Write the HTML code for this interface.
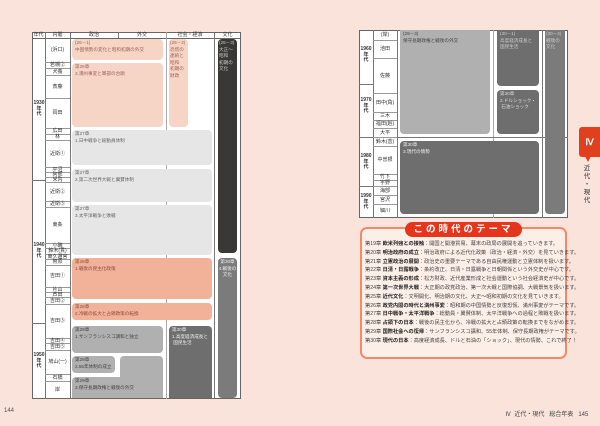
<!DOCTYPE html>
<html><head><meta charset="utf-8"><style>
*{margin:0;padding:0;box-sizing:border-box}
body{width:600px;height:426px;background:#f9e3da;position:relative;overflow:hidden;font-family:"Liberation Sans","Noto Sans CJK JP",sans-serif;color:#333}
.a{position:absolute}
.t{position:absolute;background:#fff;border:1px solid #666}
.h{position:absolute;font-size:5px;line-height:6px;text-align:center;color:#333}
.vl{position:absolute;width:1px;background:#777}
.hl{position:absolute;height:1px;background:#999}
.b{position:absolute;border-radius:4px;font-size:4.6px;line-height:6.5px;padding:1px 3px;color:#555;white-space:nowrap}
.pk{background:#f6d5c6;color:#a06050}
.or{background:#f2b29a;color:#8a4a38}
.lg{background:#e6e6e6;color:#666}
.mg{background:#b0b0b0;color:#444}
.dg{background:#6e6e6e;color:#eee}
.bk{background:#3a3835;color:#ccc}
.c{position:absolute;font-size:5px;text-align:center;color:#333;display:flex;align-items:center;justify-content:center;line-height:5px}
.d{position:absolute;font-size:5px;line-height:5.5px;text-align:center;font-weight:bold;color:#333}
.th{font-size:5.2px;line-height:8.8px;white-space:nowrap;color:#444}
.th b{color:#222}
</style></head><body>

<div class="t" style="left:32px;top:32px;width:209px;height:367px"></div>
<div class="hl" style="left:32px;top:38px;width:209px;background:#666"></div>
<div class="vl" style="left:45px;top:32px;height:367px"></div>
<div class="vl" style="left:70px;top:32px;height:367px"></div>
<div class="vl" style="left:118px;top:32px;height:6px"></div>
<div class="vl" style="left:166px;top:32px;height:367px;background:#aaa"></div>
<div class="vl" style="left:214px;top:32px;height:367px"></div>
<div class="h" style="left:32px;top:32px;width:13px">年代</div>
<div class="h" style="left:45px;top:32px;width:25px">内閣</div>
<div class="h" style="left:70px;top:32px;width:48px">政治</div>
<div class="h" style="left:118px;top:32px;width:48px">外交</div>
<div class="h" style="left:166px;top:32px;width:48px">社会・経済</div>
<div class="h" style="left:214px;top:32px;width:27px">文化</div>
<div class="hl" style="left:32px;top:180px;width:13px;background:#777"></div>
<div class="hl" style="left:32px;top:323px;width:13px;background:#777"></div>
<div class="d" style="left:32px;top:101px;width:14px">1930<br>年<br>代</div>
<div class="d" style="left:32px;top:243px;width:14px">1940<br>年<br>代</div>
<div class="d" style="left:32px;top:353px;width:14px">1950<br>年<br>代</div>

<div class="c" style="left:45px;top:39px;width:25px;height:22px">(浜口)</div>
<div class="c" style="left:45px;top:62px;width:25px;height:6px;border-top:1px solid #999">若槻②</div>
<div class="c" style="left:45px;top:68px;width:25px;height:7px;border-top:1px solid #999">犬養</div>
<div class="c" style="left:45px;top:75px;width:25px;height:23px;border-top:1px solid #999">斎藤</div>
<div class="c" style="left:45px;top:98px;width:25px;height:30px;border-top:1px solid #999">岡田</div>
<div class="c" style="left:45px;top:128px;width:25px;height:6px;border-top:1px solid #999">広田</div>
<div class="c" style="left:45px;top:134px;width:25px;height:6px;border-top:1px solid #999">林</div>
<div class="c" style="left:45px;top:140px;width:25px;height:27px;border-top:1px solid #999">近衛①</div>
<div class="c" style="left:45px;top:167px;width:25px;height:5px;border-top:1px solid #999">平沼</div>
<div class="c" style="left:45px;top:172px;width:25px;height:5px;border-top:1px solid #999">阿部</div>
<div class="c" style="left:45px;top:177px;width:25px;height:5px;border-top:1px solid #999">米内</div>
<div class="c" style="left:45px;top:182px;width:25px;height:19px;border-top:1px solid #999">近衛②</div>
<div class="c" style="left:45px;top:201px;width:25px;height:6px;border-top:1px solid #999">近衛③</div>
<div class="c" style="left:45px;top:207px;width:25px;height:36px;border-top:1px solid #999">東条</div>
<div class="c" style="left:45px;top:243px;width:25px;height:5px;border-top:1px solid #999">小磯</div>
<div class="c" style="left:45px;top:248px;width:25px;height:6px;border-top:1px solid #999">鈴木(貫)</div>
<div class="c" style="left:45px;top:254px;width:25px;height:5px;border-top:1px solid #999">東久邇宮</div>
<div class="c" style="left:45px;top:259px;width:25px;height:6px;border-top:1px solid #999">幣原</div>
<div class="c" style="left:45px;top:265px;width:25px;height:22px;border-top:1px solid #999">吉田①</div>
<div class="c" style="left:45px;top:287px;width:25px;height:5px;border-top:1px solid #999">片山</div>
<div class="c" style="left:45px;top:292px;width:25px;height:5px;border-top:1px solid #999">芦田</div>
<div class="c" style="left:45px;top:297px;width:25px;height:7px;border-top:1px solid #999">吉田②</div>
<div class="c" style="left:45px;top:304px;width:25px;height:34px;border-top:1px solid #999">吉田③</div>
<div class="c" style="left:45px;top:338px;width:25px;height:5px;border-top:1px solid #999">吉田④</div>
<div class="c" style="left:45px;top:343px;width:25px;height:7px;border-top:1px solid #999">吉田⑤</div>
<div class="c" style="left:45px;top:350px;width:25px;height:24px;border-top:1px solid #999">鳩山(一)</div>
<div class="c" style="left:45px;top:374px;width:25px;height:7px;border-top:1px solid #999">石橋</div>
<div class="c" style="left:45px;top:381px;width:25px;height:17px;border-top:1px solid #999">岸</div>

<div class="b pk" style="left:72px;top:39px;width:91px;height:21px">(26－1)<br>中国情勢の変化と昭和初期の外交</div>
<div class="b pk" style="left:72px;top:63px;width:91px;height:64px">第26章<br>3.満州事変と軍部の台頭</div>
<div class="b pk" style="left:169px;top:39px;width:19px;height:88px;padding:1px 1px">(26－2)<br>恐慌の<br>連続と<br>昭和<br>初期の<br>財政</div>
<div class="b bk" style="left:218px;top:39px;width:19px;height:214px;padding:1px 1px">(25－3)<br>大正～<br>昭和<br>初期の<br>文化</div>
<div class="b lg" style="left:72px;top:130px;width:140px;height:35px">第27章<br>1.日中戦争と総動員体制</div>
<div class="b lg" style="left:72px;top:169px;width:140px;height:33px">第27章<br>2.第二次世界大戦と翼賛体制</div>
<div class="b lg" style="left:72px;top:205px;width:140px;height:50px">第27章<br>3.太平洋戦争と敗戦</div>
<div class="b or" style="left:72px;top:258px;width:140px;height:41px">第28章<br>1.戦後の民主化政策</div>
<div class="b or" style="left:72px;top:303px;width:140px;height:17px">第28章<br>2.冷戦の拡大と占領政策の転換</div>
<div class="b mg" style="left:72px;top:326px;width:91px;height:27px">第29章<br>1.サンフランシスコ講和と独立</div>
<div class="b mg" style="left:72px;top:356px;width:43px;height:17px">第29章<br>2.55年体制の成立</div>
<div class="b mg" style="left:120px;top:356px;width:43px;height:30px"></div>
<div class="b mg" style="left:72px;top:377px;width:91px;height:21px;border-radius:4px 4px 0 0">第29章<br>3.保守長期政権と戦後の外交</div>
<div class="b dg" style="left:169px;top:326px;width:43px;height:72px;border-radius:4px 4px 0 0">第30章<br>1.高度経済成長と<br>&nbsp;国民生活</div>
<div class="b dg" style="left:218px;top:258px;width:19px;height:140px;background:#7b7b7b;text-align:center;padding:1px 0">第30章<br>4.戦後の<br>文化</div>
<div class="a" style="left:4px;top:408px;font-size:6px;color:#555">144</div>

<div class="t" style="left:359px;top:30px;width:209px;height:188px"></div>
<div class="vl" style="left:373px;top:30px;height:188px"></div>
<div class="vl" style="left:397px;top:30px;height:188px"></div>
<div class="vl" style="left:493px;top:30px;height:188px;background:#aaa"></div>
<div class="vl" style="left:542px;top:30px;height:188px"></div>
<div class="hl" style="left:359px;top:84px;width:14px;background:#777"></div>
<div class="hl" style="left:359px;top:137px;width:209px;background:#777"></div>
<div class="hl" style="left:359px;top:186px;width:14px;background:#777"></div>
<div class="d" style="left:359px;top:47px;width:14px">1960<br>年<br>代</div>
<div class="d" style="left:359px;top:98px;width:14px">1970<br>年<br>代</div>
<div class="d" style="left:359px;top:154px;width:14px">1980<br>年<br>代</div>
<div class="d" style="left:359px;top:194px;width:14px">1990<br>年<br>代</div>
<div class="c" style="left:373px;top:30px;width:24px;height:10px">(岸)</div>
<div class="c" style="left:373px;top:40px;width:24px;height:18px;border-top:1px solid #999">池田</div>
<div class="c" style="left:373px;top:58px;width:24px;height:35px;border-top:1px solid #999">佐藤</div>
<div class="c" style="left:373px;top:93px;width:24px;height:19px;border-top:1px solid #999">田中(角)</div>
<div class="c" style="left:373px;top:112px;width:24px;height:8px;border-top:1px solid #999">三木</div>
<div class="c" style="left:373px;top:120px;width:24px;height:8px;border-top:1px solid #999">福田(赳)</div>
<div class="c" style="left:373px;top:128px;width:24px;height:9px;border-top:1px solid #999">大平</div>
<div class="c" style="left:373px;top:137px;width:24px;height:9px;border-top:1px solid #999">鈴木(善)</div>
<div class="c" style="left:373px;top:146px;width:24px;height:28px;border-top:1px solid #999">中曽根</div>
<div class="c" style="left:373px;top:174px;width:24px;height:6px;border-top:1px solid #999">竹下</div>
<div class="c" style="left:373px;top:180px;width:24px;height:6px;border-top:1px solid #999">宇野</div>
<div class="c" style="left:373px;top:186px;width:24px;height:9px;border-top:1px solid #999">海部</div>
<div class="c" style="left:373px;top:195px;width:24px;height:9px;border-top:1px solid #999">宮沢</div>
<div class="c" style="left:373px;top:204px;width:24px;height:13px;border-top:1px solid #999">細川</div>
<div class="b mg" style="left:400px;top:30px;width:90px;height:104px;border-radius:0 0 4px 4px">(29－3)<br>保守長期政権と戦後の外交</div>
<div class="b dg" style="left:497px;top:30px;width:42px;height:56px;border-radius:0 0 4px 4px;color:#ccc">(30－1)<br>高度経済成長と<br>国民生活</div>
<div class="b dg" style="left:497px;top:90px;width:42px;height:44px;color:#ddd">第30章<br>2.ドルショック・<br>&nbsp;石油ショック</div>
<div class="b dg" style="left:400px;top:141px;width:139px;height:73px">第30章<br>3.現代の情勢</div>
<div class="b dg" style="left:545px;top:30px;width:20px;height:184px;background:#7b7b7b;color:#ccc;border-radius:0 0 4px 4px;padding:1px 1px">(30－4)<br>戦後の<br>文化</div>

<div class="a" style="left:579px;top:127px;width:21px;height:30px;background:#e0401e;border-radius:3px 0 0 3px;color:#fff;font-family:'Liberation Serif',serif;font-weight:bold;font-size:9px;text-align:center;line-height:30px">Ⅳ</div>
<div class="a" style="left:585px;top:156px;width:0;height:0;border-left:3px solid transparent;border-right:3px solid transparent;border-top:6px solid #e0401e"></div>
<div class="a" style="left:583px;top:165px;width:8px;font-size:6.5px;line-height:8px;color:#333;text-align:center">近<br>代<br>・<br>現<br>代</div>

<div class="a" style="left:360px;top:227px;width:207px;height:132px;border:2px solid #f08a6a;border-radius:7px;background:#fcefe8"></div>
<div class="a" style="left:405px;top:222px;width:117px;height:15px;background:#e5361d;border-radius:8px;color:#fff;font-weight:bold;font-size:9.5px;line-height:15px;text-align:center;letter-spacing:3px">この時代のテーマ</div>
<div class="a th" style="left:365px;top:240px">
<div>第19章 <b>欧米列強との接触</b>：開国と開港貿易、幕末の政局の展開を追っていきます。</div>
<div>第20章 <b>明治政府の成立</b>：明治政府による近代化政策（政治・経済・外交）を見ていきます。</div>
<div>第21章 <b>立憲政治の展開</b>：政治史の重要テーマである自由民権運動と立憲体制を扱います。</div>
<div>第22章 <b>日清・日露戦争</b>：条約改正、日清・日露戦争と日朝関係という外交史が中心です。</div>
<div>第23章 <b>資本主義の形成</b>：松方財政、近代産業形成と社会運動という社会経済史が中心です。</div>
<div>第24章 <b>第一次世界大戦</b>：大正期の政党政治、第一次大戦と国際協調、大戦景気を扱います。</div>
<div>第25章 <b>近代文化</b>：文明開化、明治期の文化、大正～昭和初期の文化を見ていきます。</div>
<div>第26章 <b>政党内閣の時代と満州事変</b>：昭和期の中国情勢と反復恐慌、満州事変がテーマです。</div>
<div>第27章 <b>日中戦争・太平洋戦争</b>：総動員・翼賛体制、太平洋戦争への過程と敗戦を扱います。</div>
<div>第28章 <b>占領下の日本</b>：戦後の民主化から、冷戦の拡大と占領政策の転換までをながめます。</div>
<div>第29章 <b>国際社会への復帰</b>：サンフランシスコ講和、55年体制、保守長期政権がテーマです。</div>
<div>第30章 <b>現代の日本</b>：高度経済成長、ドルと石油の「ショック」、現代の情勢、これで終了！</div>
</div>

<div class="a" style="left:505px;top:409px;font-size:6px;color:#444;white-space:nowrap">Ⅳ&nbsp; 近代・現代&nbsp;&nbsp; 総合年表&nbsp;&nbsp; 145</div>
</body></html>
